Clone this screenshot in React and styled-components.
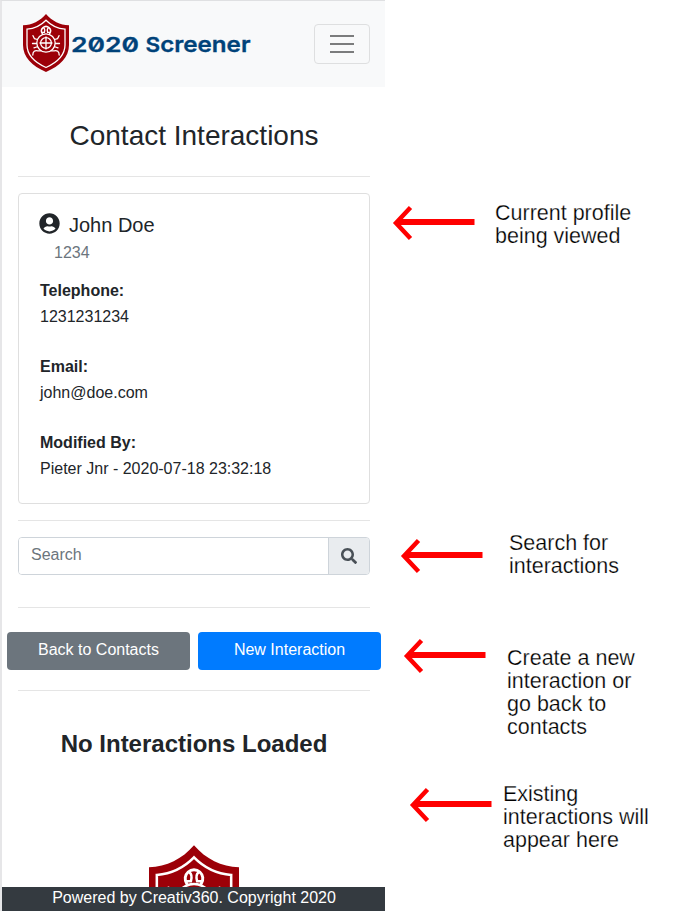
import React from "react";
import styled, { createGlobalStyle } from "styled-components";
import { FaUserCircle, FaSearch } from "react-icons/fa";

const GlobalStyle = createGlobalStyle`
  * { box-sizing: border-box; }
  body {
    margin: 0;
    background: #fff;
    color: #212529;
    font: 400 16px/24px "Liberation Sans", Arial, sans-serif;
    overflow: hidden;
  }
`;

const Page = styled.main`
  display: flex;
  width: 686px;
  height: 911px;
  overflow: hidden;
`;

const Phone = styled.section`
  display: flex;
  flex-direction: column;
  width: 385px;
  height: 911px;
  border-top: 1px solid #dfe0e2;
  border-left: 2px solid #e6e6e8;
`;

const Navbar = styled.header`
  display: flex;
  flex: none;
  align-items: center;
  justify-content: space-between;
  height: 86px;
  padding: 0 15px 0 21px;
  background: #f8f9fa;
`;

const Brand = styled.div`
  display: flex;
  align-items: center;
  gap: 2px;
  margin-top: -2px;
`;

const BrandShield = styled.svg`
  display: block;
  width: 46px;
  height: 58px;
`;

const Wordmark = styled.svg`
  display: block;
  width: 182px;
  height: 24px;
  overflow: visible;
  text {
    font: 600 20.5px Inter, sans-serif;
    font-feature-settings: "zero" 1;
    fill: #004279;
    stroke: #004279;
    stroke-width: 0.3px;
  }
  tspan { font-size: 22px; }
`;

const MenuButton = styled.button`
  display: flex;
  flex-direction: column;
  align-items: center;
  justify-content: center;
  gap: 6px;
  width: 56px;
  height: 40px;
  padding: 0;
  border: 1px solid #dedfe0;
  border-radius: 4px;
  background: transparent;
`;

const MenuBar = styled.span`
  width: 24px;
  height: 2px;
  background: #7b7c7d;
`;

const Content = styled.div`
  display: flex;
  flex: 1;
  flex-direction: column;
  min-height: 0;
  padding: 0 15px 0 16px;
  overflow: hidden;
`;

const Title = styled.h1`
  margin: 32px 0 23px;
  font-size: 28px;
  font-weight: 400;
  line-height: 34px;
  text-align: center;
`;

const Divider = styled.hr`
  flex: none;
  width: 100%;
  height: 1px;
  margin: 0 0 ${(p) => p.$after}px;
  border: 0;
  background: #e5e5e5;
`;

const Card = styled.article`
  flex: none;
  height: 311px;
  margin-bottom: 16px;
  padding: 19px 21px;
  border: 1px solid #dfdfdf;
  border-radius: 4px;
`;

const ProfileName = styled.h2`
  display: flex;
  align-items: center;
  gap: 9px;
  margin: 0 0 0 -1px;
  font-size: 20px;
  font-weight: 400;
  line-height: 24px;
  svg { margin-top: -4px; }
`;

const ProfileId = styled.div`
  margin: 4px 0 13px 14px;
  color: #6c757d;
`;

const Field = styled.dl`
  margin: 0 0 24px;
  line-height: 26px;
`;
const FieldLabel = styled.dt`
  font-weight: 700;
`;
const FieldValue = styled.dd`
  margin: 0;
`;

const SearchGroup = styled.div`
  display: flex;
  flex: none;
  height: 38px;
  margin-bottom: 32px;
  border: 1px solid #ced4da;
  border-radius: 4px;
  overflow: hidden;
`;

const SearchInput = styled.input`
  flex: 1;
  min-width: 0;
  padding: 0 12px 2px;
  border: 0;
  outline: 0;
  color: #495057;
  font: 16px "Liberation Sans", Arial, sans-serif;
  &::placeholder { color: #6c757d; opacity: 1; }
`;

const SearchButton = styled.button`
  display: flex;
  align-items: center;
  justify-content: center;
  width: 41px;
  padding: 0;
  border: 0;
  border-left: 1px solid #ced4da;
  background: #e9ecef;
  color: #495057;
`;

const Actions = styled.div`
  display: flex;
  flex: none;
  gap: 8px;
  margin: 0 -11px 20px;
`;

const ActionButton = styled.button`
  flex: 1;
  height: 38px;
  padding: 0 0 2px;
  border: 0;
  border-radius: 4px;
  background: ${(p) => (p.$primary ? "#007bff" : "#6c757d")};
  color: #fff;
  font: 16px "Liberation Sans", Arial, sans-serif;
`;

const EmptyTitle = styled.h2`
  flex: none;
  margin: 0;
  font-size: 24px;
  line-height: 30px;
  text-align: center;
`;

const EmptyShield = styled.svg`
  flex: none;
  display: block;
  width: 90px;
  height: 114px;
  margin: 85.5px auto 0 130.5px;
`;

const Footer = styled.footer`
  flex: none;
  height: 24px;
  padding-left: 1px;
  background: #343a40;
  color: #fff;
  line-height: 22px;
  text-align: center;
`;

const Notes = styled.aside`
  flex: 1;
`;

const Note = styled.div`
  display: flex;
  align-items: flex-start;
  gap: ${(p) => p.$gap}px;
  margin: ${(p) => p.$before}px 0 0 ${(p) => p.$indent}px;
`;

const Arrow = styled.svg`
  flex: none;
  width: 84px;
  height: 36px;
  margin-top: ${(p) => p.$drop}px;
`;

const NoteText = styled.p`
  margin: 0;
  color: #000;
  font-size: 21.5px;
  line-height: 23px;
  white-space: pre-line;
  -webkit-text-stroke: 0.25px #fff;
`;

const ShieldArt = ({ as: Frame }) => (
  <Frame viewBox="0 0 46 58" aria-hidden="true">
    <path
      fill="#9c0008"
      d="M23 0C17 7 9 11 0 11.3V31c0 12 9 21 23 27 14-6 23-15 23-27V11.3C37 11 29 7 23 0Z"
    />
    <g fill="none" stroke="#fff" strokeWidth="1.3" strokeLinecap="round">
      <path d="M23 6.200C18 11.300 11.500 14.600 4 15.200V31c0 9.500 7 17 19 22.500C35 48 42 40.500 42 31V15.200C34.500 14.600 28 11.300 23 6.200Z" />
      <path d="M19.300 19.600a4.500 4.500 0 1 1 7.400 0" strokeWidth="1.500" />
      <path d="M20.600 13.800c1.300 1 1.300 3 .8 4.600h-2.200M25.400 13.800c-1.300 1-1.300 3-.8 4.600h2.200" />
      <circle cx="23" cy="29" r="9.200" />
      <circle cx="23" cy="29" r="5.400" />
      <path d="M23 23v12M17 29h12" />
      <path d="M14.300 25.500l-2.800-.8-1.500-3M13.500 29.500H9.500M31.700 25.500l2.800-.8 1.500-3M32.500 29.500h4" />
      <path d="M9.800 41c0-3.800 2.200-4.800 5-4.200l2.800 0M36.200 41c0-3.800-2.200-4.800-5-4.200l-2.800 0M13.600 33l-2.600.8M32.400 33l2.600.8" />
    </g>
  </Frame>
);

const notes = [
  { before: 202, indent: 7, gap: 19, drop: 3, text: "Current profile\nbeing viewed" },
  { before: 284, indent: 15, gap: 25, drop: 6, text: "Search for\ninteractions" },
  { before: 69, indent: 18, gap: 20, drop: -9, text: "Create a new\ninteraction or\ngo back to\ncontacts" },
  { before: 44, indent: 24, gap: 10, drop: 4, text: "Existing\ninteractions will\nappear here" },
];

export default function App() {
  return (
    <>
      <GlobalStyle />
      <Page>
        <Phone>
          <Navbar>
            <Brand>
              <ShieldArt as={BrandShield} />
              <Wordmark>
                <text x="0" y="20.700" textLength="68" lengthAdjust="spacingAndGlyphs">
                  2020
                </text>
                <text x="74.500" y="20.700" textLength="105" lengthAdjust="spacingAndGlyphs">
                  S<tspan>creener</tspan>
                </text>
              </Wordmark>
            </Brand>
            <MenuButton aria-label="Menu">
              <MenuBar />
              <MenuBar />
              <MenuBar />
            </MenuButton>
          </Navbar>
          <Content>
            <Title>Contact Interactions</Title>
            <Divider $after={16} />
            <Card>
              <ProfileName>
                <FaUserCircle size={21} />
                John Doe
              </ProfileName>
              <ProfileId>1234</ProfileId>
              <Field>
                <FieldLabel>Telephone:</FieldLabel>
                <FieldValue>1231231234</FieldValue>
              </Field>
              <Field>
                <FieldLabel>Email:</FieldLabel>
                <FieldValue>john@doe.com</FieldValue>
              </Field>
              <Field>
                <FieldLabel>Modified By:</FieldLabel>
                <FieldValue>Pieter Jnr - 2020-07-18 23:32:18</FieldValue>
              </Field>
            </Card>
            <Divider $after={16} />
            <SearchGroup>
              <SearchInput placeholder="Search" />
              <SearchButton aria-label="Search">
                <FaSearch size={16} />
              </SearchButton>
            </SearchGroup>
            <Divider $after={24} />
            <Actions>
              <ActionButton>Back to Contacts</ActionButton>
              <ActionButton $primary>New Interaction</ActionButton>
            </Actions>
            <Divider $after={38} />
            <EmptyTitle>No Interactions Loaded</EmptyTitle>
            <ShieldArt as={EmptyShield} />
          </Content>
          <Footer>Powered by Creativ360. Copyright 2020</Footer>
        </Phone>
        <Notes>
          {notes.map((n) => (
            <Note key={n.text} $before={n.before} $indent={n.indent} $gap={n.gap}>
              <Arrow $drop={n.drop} viewBox="0 0 84 36" aria-hidden="true">
                <path d="M82.500 17H5" fill="none" stroke="#f00" strokeWidth="6" />
                <path d="M18.500 2.500L4 18l14.500 15.500" fill="none" stroke="#f00" strokeWidth="4.500" />
              </Arrow>
              <NoteText>{n.text}</NoteText>
            </Note>
          ))}
        </Notes>
      </Page>
    </>
  );
}
